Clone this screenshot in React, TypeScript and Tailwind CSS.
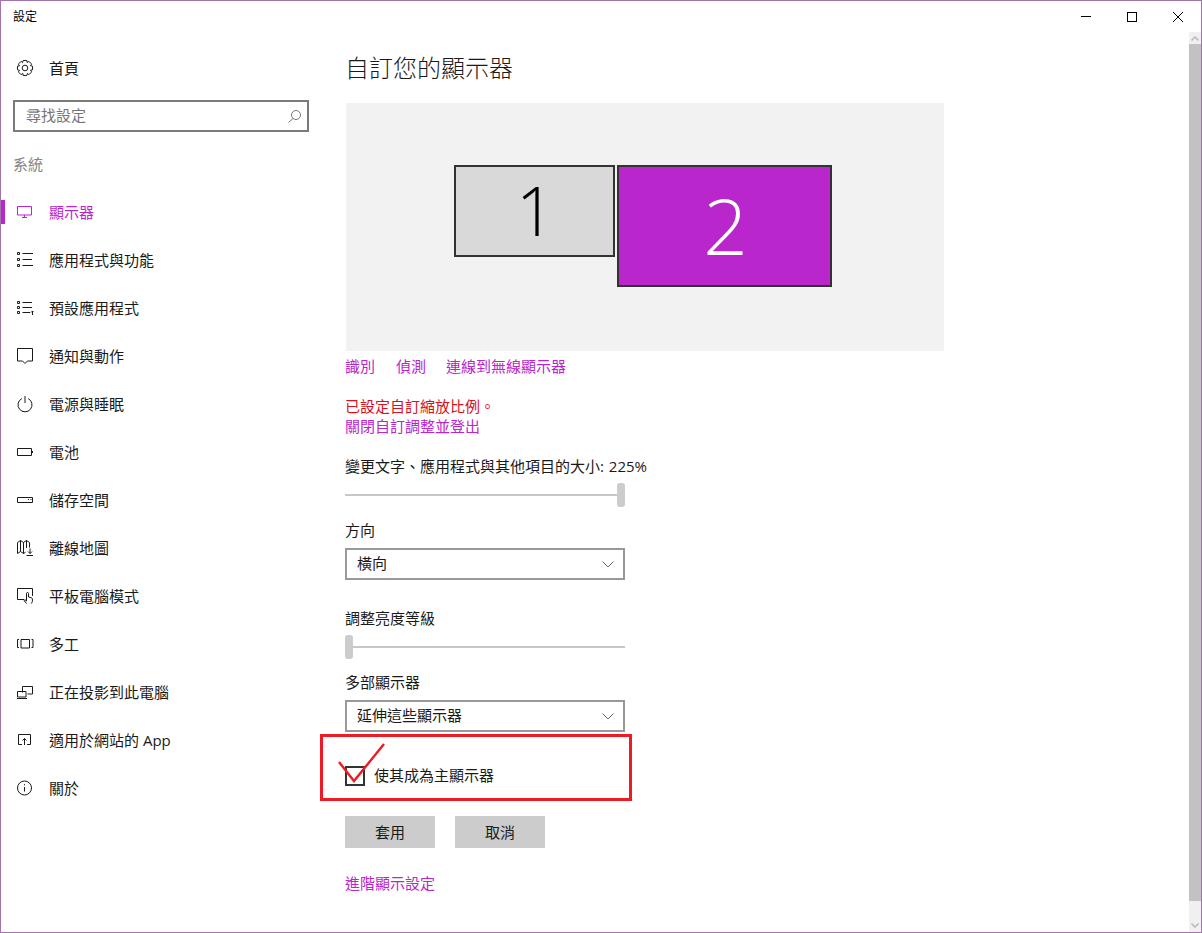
import type { ReactNode } from "react";

/* ---------- Sidebar icons, drawn on a 16px grid ---------- */
function Glyph({ children, color = "#1a1a1a" }: { children: ReactNode; color?: string }) {
  return (
    <svg width="16" height="16" viewBox="0 0 16 16" fill="none" stroke={color} strokeWidth="1" className="shrink-0 overflow-visible">
      {children}
    </svg>
  );
}

// outline of the home gear: 8 teeth round the centre of the 16px grid
function gearPath() {
  const points: string[] = [];
  for (let i = 0; i < 8; i++) {
    const a = (i * Math.PI) / 4;
    [
      [-0.26, 7.6],
      [-0.13, 7.6],
      [0.13, 7.6],
      [0.26, 7.6],
      [0.36, 5.9],
    ].forEach(([da, r], j) => {
      const angle = a + da;
      const x = (8 + r * Math.sin(angle)).toFixed(2);
      const y = (8 - r * Math.cos(angle)).toFixed(2);
      points.push(`${i === 0 && j === 0 ? "M" : "L"}${x} ${y}`);
    });
  }
  return points.join("") + "Z";
}

const navItems: { label: string; icon: ReactNode; active?: boolean }[] = [
  {
    label: "顯示器",
    active: true,
    icon: (
      <Glyph color="#b926cb">
        <path d="M.5 2.5h14v8.5H.5zM7.5 11v2.5M5 13.5h5" />
      </Glyph>
    ),
  },
  {
    label: "應用程式與功能",
    icon: (
      <Glyph>
        <path d="M.5.5h2v2h-2zM.5 6.5h2v2h-2zM.5 12.5h2v2h-2zM5.5 1.5H16M5.5 7.5H15M5.5 13.5H16" />
      </Glyph>
    ),
  },
  {
    label: "預設應用程式",
    icon: (
      <Glyph>
        <path d="M.5 1.5h2v2h-2zM.5 6.5h2v2h-2zM.5 11.5h2v2h-2zM5.5 2.5H15M5.5 7.5H15M5.5 12.5H13M15.5 15v-4M14 12.5l1.5-1.5 1 1" />
      </Glyph>
    ),
  },
  {
    label: "通知與動作",
    icon: (
      <Glyph>
        <path d="M.5.5h15v12.5h-5L8 15.5 5.5 13h-5z" />
      </Glyph>
    ),
  },
  {
    label: "電源與睡眠",
    icon: (
      <Glyph>
        <path d="M4.8 2.6a7 7 0 1 0 6.4 0M8 0v7" />
      </Glyph>
    ),
  },
  {
    label: "電池",
    icon: (
      <Glyph>
        <path d="M.5 4.5h14v7H.5zM15.5 7v2" />
      </Glyph>
    ),
  },
  {
    label: "儲存空間",
    icon: (
      <Glyph>
        <path d="M.5 5.5h15v5H.5zM11 7.5h1M13.5 7.5h1" />
      </Glyph>
    ),
  },
  {
    label: "離線地圖",
    icon: (
      <Glyph>
        <path d="M.5 13.5V2.5L3.5.5 6.5 2.5 9.5.5l3 2v5M3.5.5V11.5L.5 13.5M6.5 2.5V13.5L3.5 11.5M6.5 13.5l2-1.2M9.5.5V8M13 8.5v5M11 11.5l2 2 2-2M9.5 15.5H16" />
      </Glyph>
    ),
  },
  {
    label: "平板電腦模式",
    icon: (
      <Glyph>
        <path d="M7 11.5H.5V.5h15V8M9.5 15.5L7 12.5l1-.8 1.5 1.3V5.5a1 1 0 0 1 2 0V9l3 .8c.6.2.9.6.9 1.2v2.5l-1 2" />
      </Glyph>
    ),
  },
  {
    label: "多工",
    icon: (
      <Glyph>
        <path d="M4 3.5h8.5v8.5H4zM2 3.5H.5v8H2M14.5 3.5H16v8h-1.5" />
      </Glyph>
    ),
  },
  {
    label: "正在投影到此電腦",
    icon: (
      <Glyph>
        <path d="M5.5 8.5V2.5h10v7.5h-5M.5 7.5h8.5v5.5H.5zM0 14.5h10" />
      </Glyph>
    ),
  },
  {
    label: "適用於網站的 App",
    icon: (
      <Glyph>
        <path d="M5 12.5H1.5v-10h12v10H10M7.5 13V6.5M5.5 8.5l2-2 2 2" />
      </Glyph>
    ),
  },
  {
    label: "關於",
    icon: (
      <Glyph>
        <circle cx="7.5" cy="8" r="7" />
        <path d="M7.5 7v4.5M7.5 4.2v1.2" />
      </Glyph>
    ),
  },
];

/* ---------- Small form pieces ---------- */
function Label({ children, className = "" }: { children: ReactNode; className?: string }) {
  return <div className={`h-5 leading-[18px] text-[15px] text-[#1a1a1a] ${className}`}>{children}</div>;
}

function Link({ children, className = "" }: { children: ReactNode; className?: string }) {
  return <a className={`h-5 leading-[18px] text-[15px] text-[#b926cb] block ${className}`}>{children}</a>;
}

function Dropdown({ value, className = "" }: { value: string; className?: string }) {
  return (
    <div className={`w-[280px] h-8 border-2 border-[#999999] bg-white flex items-center justify-between pl-[10px] pr-[9px] text-[15px] leading-[18px] text-[#1a1a1a] ${className}`}>
      <span className="pb-[2px]">{value}</span>
      <svg width="12" height="7" viewBox="0 0 12 7" fill="none" stroke="#666" strokeWidth="1">
        <path d="M.5.5L6 6 11.5.5" />
      </svg>
    </div>
  );
}

function Slider({ end, className = "" }: { end?: boolean; className?: string }) {
  return (
    <div className={`w-[280px] h-6 flex items-center ${end ? "justify-end" : "justify-start"} relative ${className}`}>
      <div className="absolute left-0 right-0 top-[11px] h-[2px] bg-[#c8c8c8]" />
      <div className="relative w-2 h-6 rounded-[3px] bg-[#cccccc]" />
    </div>
  );
}

export default function App() {
  return (
    <div className="relative w-[1202px] h-[933px] border border-[#a274ab] bg-white font-['Open_Sans','Noto_Sans_CJK_TC',sans-serif] overflow-hidden">
      {/* Title bar */}
      <div className="h-[31px] flex items-center justify-between pl-3">
        <span className="text-xs text-black">設定</span>
        <div className="flex">
          <div className="w-[46px] h-[31px] flex items-center justify-center">
            <div className="w-[10px] h-px bg-black" />
          </div>
          <div className="w-[46px] h-[31px] flex items-center justify-center">
            <div className="w-[10px] h-[10px] border border-black" />
          </div>
          <div className="w-[46px] h-[31px] flex items-center justify-center">
            <svg width="10" height="10" viewBox="0 0 10 10" stroke="#000" strokeWidth="1">
              <path d="M0 0l10 10M10 0L0 10" />
            </svg>
          </div>
        </div>
      </div>

      <div className="flex h-[900px]">
        {/* Sidebar */}
        <aside className="w-[319px] shrink-0">
          <div className="mt-3 h-12 flex items-center pl-4 text-[15px] text-[#1a1a1a]">
            <div className="mr-4">
              <Glyph>
                <path d={gearPath()} />
                <circle cx="8" cy="8" r="2.8" />
              </Glyph>
            </div>
            <span>首頁</span>
          </div>
          <div className="mt-2 ml-3 w-[296px] h-8 border-2 border-[#7a7a7a] flex items-center justify-between pl-[11px] pr-[6px] text-[15px] leading-[18px] text-[#767676]">
            <span className="pb-[2px]">尋找設定</span>
            <svg width="13" height="13" viewBox="0 0 13 13" fill="none" stroke="#777" strokeWidth="1">
              <circle cx="8" cy="5" r="4.5" />
              <path d="M5 8.5L.5 12.5" />
            </svg>
          </div>
          <div className="mt-[23px] ml-3 h-5 leading-[18px] text-[15px] text-[#868686]">系統</div>
          <nav className="mt-[13px]">
            {navItems.map((item) => (
              <div key={item.label} className="h-12 flex items-center">
                <div className={`w-1 h-6 ${item.active ? "bg-[#b926cb]" : ""}`} />
                <div className="ml-3 mr-4">{item.icon}</div>
                <span className={`text-[15px] ${item.active ? "text-[#b926cb]" : "text-[#1a1a1a]"}`}>{item.label}</span>
              </div>
            ))}
          </nav>
        </aside>

        {/* Main content */}
        <main className="flex-1 pl-[25px]">
          <h1 className="mt-3 h-12 leading-[48px] text-2xl font-light text-[#1a1a1a]">自訂您的顯示器</h1>
          <div className="mt-[11px] ml-px w-[598px] h-[248px] bg-[#f2f2f2] flex items-start gap-[2px] pl-[108px] pt-[62px]">
            <div className="w-[161px] h-[92px] border-2 border-[#333333] bg-[#d9d9d9] flex items-center justify-center pl-[2px] pb-[2px] text-[68px] font-light text-black">
              1
            </div>
            <div className="w-[215px] h-[122px] border-2 border-[#333333] bg-[#b926cb] flex items-center justify-center pl-[2px] pb-[2px] text-[78px] font-light text-white">
              2
            </div>
          </div>

          <div className="mt-[6px] flex">
            <Link className="mr-[21px]">識別</Link>
            <Link className="mr-5">偵測</Link>
            <Link>連線到無線顯示器</Link>
          </div>

          <div className="mt-5 h-5 leading-[18px] text-[15px] text-[#d9101d]">已設定自訂縮放比例。</div>
          <Link>關閉自訂調整並登出</Link>

          <Label className="mt-5 [word-spacing:1px]">變更文字、應用程式與其他項目的大小: 225%</Label>
          <Slider end className="mt-[6px]" />

          <Label className="mt-[14px]">方向</Label>
          <Dropdown value="橫向" className="mt-[7px]" />

          <Label className="mt-[29px]">調整亮度等級</Label>
          <Slider className="mt-[6px]" />

          <Label className="mt-[14px]">多部顯示器</Label>
          <Dropdown value="延伸這些顯示器" className="mt-[7px]" />

          <div className="mt-[34px] flex items-start gap-[9px] h-5">
            <div className="w-5 h-5 border-2 border-[#333333]" />
            <span className="text-[15px] leading-[18px] text-[#1a1a1a]">使其成為主顯示器</span>
          </div>

          <div className="mt-[30px] flex gap-5">
            <button className="w-[90px] h-8 bg-[#cccccc] text-[15px] text-[#1a1a1a]">套用</button>
            <button className="w-[90px] h-8 bg-[#cccccc] text-[15px] text-[#1a1a1a]">取消</button>
          </div>

          <Link className="mt-[26px]">進階顯示設定</Link>
        </main>

        {/* Scrollbar */}
        <div className="w-3 shrink-0 flex flex-col bg-[#f0f0f0]">
          <div className="h-3 flex items-center justify-center">
            <svg width="8" height="5" viewBox="0 0 8 5" fill="none" stroke="#bdbdbd" strokeWidth="1.6">
              <path d="M.5 4.5L4 1l3.5 3.5" />
            </svg>
          </div>
          <div className="h-[857px] bg-[#c2c2c2]" />
          <div className="flex-1 flex items-end justify-center pb-1">
            <svg width="8" height="5" viewBox="0 0 8 5" fill="none" stroke="#bdbdbd" strokeWidth="1.6">
              <path d="M.5.5L4 4l3.5-3.5" />
            </svg>
          </div>
        </div>
      </div>

      {/* Red annotation drawn over the page */}
      <div className="absolute left-[319px] top-[733px] w-[312px] h-[67px] border-[3px] border-[#ed1c24]" />
      <svg className="absolute left-[335px] top-[740px]" width="52" height="44" viewBox="0 0 52 44" fill="none" stroke="#ed1c24" strokeWidth="2.4">
        <path d="M3 21L18 40 48 3" />
      </svg>
    </div>
  );
}
